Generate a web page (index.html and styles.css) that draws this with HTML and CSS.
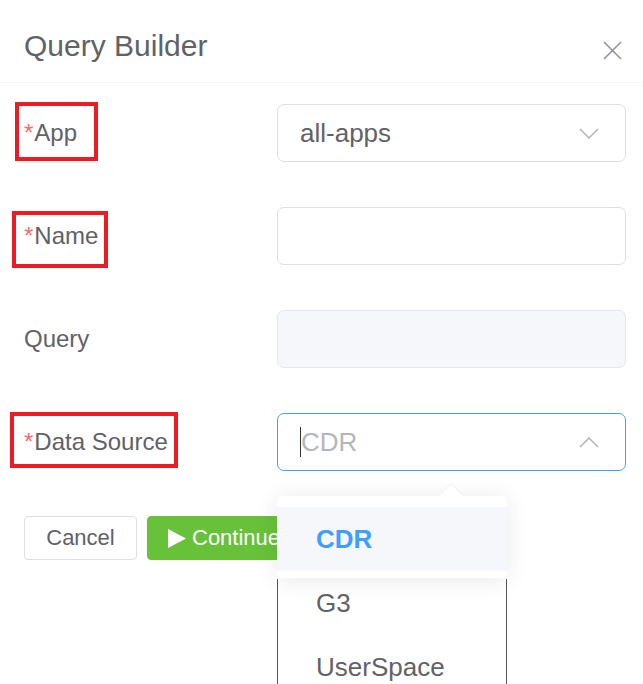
FILE: index.html
```html
<!DOCTYPE html>
<html lang="en">
<head>
<meta charset="utf-8">
<title>Query Builder</title>
<link rel="stylesheet" href="styles.css">
</head>
<body>
<div class="dialog">
  <header class="dlg-header">
    <span class="dlg-title">Query Builder</span>
    <button class="close" type="button" aria-label="Close">
      <svg width="19" height="19" viewBox="0 0 19 19"><path d="M1 1 L18 18 M18 1 L1 18" stroke="#909399" stroke-width="1.6" fill="none"/></svg>
    </button>
  </header>

  <div class="form">
    <div class="row">
      <label class="lbl"><span class="req">*</span>App</label>
      <div class="field select">
        <span class="val">all-apps</span>
        <svg class="chev" width="20" height="11" viewBox="0 0 20 11"><path d="M1 1 L10 10 L19 1" stroke="#b4b7bd" stroke-width="1.6" fill="none"/></svg>
      </div>
    </div>
    <div class="row">
      <label class="lbl"><span class="req">*</span>Name</label>
      <div class="field"></div>
    </div>
    <div class="row">
      <label class="lbl">Query</label>
      <div class="field disabled"></div>
    </div>
    <div class="row">
      <label class="lbl"><span class="req">*</span>Data Source</label>
      <div class="field select focused">
        <span class="caret"></span><span class="placeholder">CDR</span>
        <svg class="chev" width="20" height="11" viewBox="0 0 20 11"><path d="M1 10 L10 1 L19 10" stroke="#b4b7bd" stroke-width="1.6" fill="none"/></svg>
      </div>
    </div>
    <div class="actions">
      <button class="btn" type="button">Cancel</button>
      <button class="btn primary" type="button">
        <svg width="18" height="19" viewBox="0 0 18 19"><path d="M0 0 L18 9.5 L0 19 Z" fill="#fff"/></svg>Continue
      </button>
    </div>
  </div>

  <div class="mark mark-app"></div>
  <div class="mark mark-name"></div>
  <div class="mark mark-ds"></div>

  <div class="popper">
    <span class="pop-arrow"></span>
    <ul class="options">
      <li class="opt selected">CDR</li>
      <li class="opt">G3</li>
      <li class="opt">UserSpace</li>
    </ul>
  </div>
</div>
</body>
</html>
```

FILE: styles.css
```css
html, body {
  margin: 0;
  padding: 0;
  height: 684px;
  overflow: hidden;
  background: #fff;
}
body {
  font-family: "Liberation Sans", Arial, sans-serif;
  color: #606266;
}
.dialog {
  position: relative;
  width: 643px;
  height: 684px;
}
.dlg-header {
  display: flex;
  align-items: center;
  justify-content: space-between;
  height: 73px;
  padding: 9px 21px 0 24px;
  border-bottom: 1px solid #f0f4f9;
}
.dlg-title {
  font-size: 30px;
  line-height: 1;
  color: #606266;
}
.close {
  border: 0;
  background: none;
  padding: 0;
  margin-top: 10px;
  width: 19px;
  height: 19px;
  display: flex;
}
.form {
  padding: 21px 17px 0 24px;
}
.row {
  display: flex;
  align-items: center;
  height: 58px;
  margin-bottom: 45px;
}
.lbl {
  width: 253px;
  font-size: 24px;
  line-height: 1;
  color: #606266;
}
.req {
  color: #f56c6c;
  margin-right: 1px;
}
.field {
  flex: 1;
  height: 56px;
  border: 1px solid #dcdfe6;
  border-radius: 7px;
  display: flex;
  align-items: center;
  padding: 0 26px 0 22px;
  font-size: 26px;
  color: #606266;
}
.field.disabled {
  background: #f5f7fa;
  border-color: #e4e7ed;
}
.field.focused {
  border-color: #409eff;
}
.val, .placeholder {
  flex: 1;
}
.placeholder {
  color: #b3b6bc;
}
.caret {
  width: 1px;
  height: 30px;
  background: #333;
}
.chev {
  display: block;
}
.actions {
  display: flex;
  gap: 10px;
}
.btn {
  height: 44px;
  border-radius: 4px;
  font-family: "Liberation Sans", Arial, sans-serif;
  font-size: 22px;
  display: flex;
  align-items: center;
  cursor: pointer;
}
.btn:first-child {
  width: 113px;
  justify-content: center;
  background: #fff;
  border: 1px solid #dcdfe6;
  color: #606266;
}
.btn.primary {
  background: #67c23a;
  border: 1px solid #67c23a;
  color: #fff;
  padding: 0 22px 0 20px;
  gap: 6px;
}
.mark {
  position: absolute;
  border: 4px solid #ed1c24;
  box-sizing: border-box;
}
.mark-app { left: 15px; top: 102px; width: 83px; height: 59px; }
.mark-name { left: 12px; top: 211px; width: 96px; height: 57px; }
.mark-ds { left: 10px; top: 412px; width: 168px; height: 56px; }

.popper {
  position: absolute;
  left: 277px;
  top: 496px;
  width: 230px;
  height: 220px;
}
.popper::before {
  content: "";
  position: absolute;
  left: 0;
  right: 0;
  top: 0;
  height: 82px;
  background: #fff;
  border-radius: 6px 6px 0 0;
  box-shadow: 0 2px 24px rgba(0, 0, 0, 0.09);
}
.popper::after {
  content: "";
  position: absolute;
  left: 0;
  right: 0;
  top: 83px;
  bottom: 0;
  border-left: 1px solid #55575b;
  border-right: 1px solid #55575b;
}
.pop-arrow {
  position: absolute;
  left: 162px;
  top: -11px;
  width: 0;
  height: 0;
  border-left: 12px solid transparent;
  border-right: 12px solid transparent;
  border-bottom: 11px solid #fff;
  filter: drop-shadow(0 -1px 1px rgba(0, 0, 0, 0.04));
  z-index: 2;
}
.options {
  position: relative;
  z-index: 1;
  list-style: none;
  margin: 0;
  padding: 11px 0 0;
}
.opt {
  height: 64px;
  line-height: 64px;
  padding-left: 39px;
  font-size: 26px;
  color: #606266;
}
.opt.selected {
  background: #f5f7fa;
  color: #409eff;
  font-weight: bold;
}
```
